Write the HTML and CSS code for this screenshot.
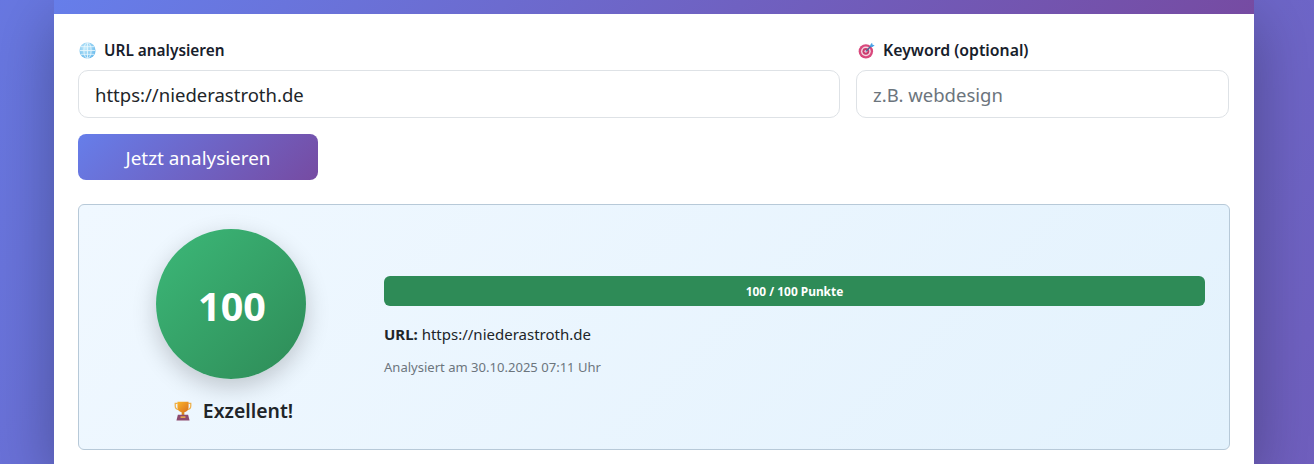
FILE: index.html
```html
<!DOCTYPE html>
<html lang="de">
<head>
<meta charset="utf-8">
<title>SEO Analyse</title>
<link rel="stylesheet" href="styles.css">
</head>
<body>
<main class="container">
  <div class="header-strip"></div>
  <section class="content">
    <form class="form-grid">
      <div class="field">
        <label class="label" for="url">
          <svg class="icon" viewBox="0 0 16 16"><defs><radialGradient id="g1" cx=".4" cy=".35" r=".75"><stop offset="0" stop-color="#c6ecfb"/><stop offset="1" stop-color="#5fb4ea"/></radialGradient></defs><circle cx="8" cy="8" r="7.6" fill="url(#g1)"/><g fill="none" stroke="#e9f7fd" stroke-width=".8"><ellipse cx="8" cy="8" rx="3.4" ry="7.4"/><path d="M8 .6v14.8M.6 8h14.8M1.6 4.4h12.8M1.6 11.6h12.8"/></g></svg>
          <span>URL analysieren</span>
        </label>
        <input class="input" id="url" type="text" value="https://niederastroth.de">
      </div>
      <div class="field">
        <label class="label label-keyword" for="kw">
          <svg class="icon" viewBox="0 0 16 16"><circle cx="7.4" cy="8.8" r="6.8" fill="#d9487d"/><circle cx="7.4" cy="8.8" r="4.6" fill="#f3d6e0"/><circle cx="7.4" cy="8.8" r="3.2" fill="#c93a6e"/><circle cx="7.4" cy="8.8" r="1.3" fill="#f3d6e0"/><path d="M7.4 8.8 13 3" stroke="#3d6f9e" stroke-width="1.2"/><path d="M11.6 2.6 13.2.6l.5 2 2 .5-2 1.7-2.1-.4z" fill="#4aa3e8"/></svg>
          <span>Keyword (optional)</span>
        </label>
        <input class="input" id="kw" type="text" placeholder="z.B. webdesign">
      </div>
    </form>
    <button class="submit" type="button">Jetzt analysieren</button>
    <section class="result">
      <div class="score-col">
        <div class="score-circle">100</div>
        <div class="rating">
          <svg class="trophy" viewBox="0 0 16 18"><defs><linearGradient id="g2" x1="0" y1="0" x2="1" y2="1"><stop offset="0" stop-color="#fbb62c"/><stop offset="1" stop-color="#d9701c"/></linearGradient></defs><path d="M3.2 2.2H1v2.3c0 1.900 1.400 3 3.200 3.200M12.800 2.200H15v2.300c0 1.900-1.400 3-3.200 3.200" fill="none" stroke="#eeb04a" stroke-width="1.100"/><path d="M3 .6h10v4.800c0 3-2.200 4.800-5 4.800s-5-1.800-5-4.800z" fill="url(#g2)"/><rect x="6.800" y="9.800" width="2.400" height="3" fill="#d9861f"/><path d="M3.400 12.400h9.200l1.300 5.200H2.100z" fill="#8d4a6e"/><rect x="5.800" y="13.800" width="4.400" height="1.400" fill="#eeb04a"/></svg>
          <span>Exzellent!</span>
        </div>
      </div>
      <div class="detail-col">
        <div class="progress"><div class="progress-bar" style="width: 100%">100 / 100 Punkte</div></div>
        <p class="url-line"><strong>URL:</strong> https://niederastroth.de</p>
        <p class="date-line">Analysiert am 30.10.2025 07:11 Uhr</p>
      </div>
    </section>
  </section>
</main>
</body>
</html>
```
FILE: styles.css
```css
* { box-sizing: border-box; }
html, body { margin: 0; height: 100%; overflow: hidden; }
body {
  padding-right: 6px;
  background: linear-gradient(135deg, #667eea 0%, #764ba2 100%);
  background-size: 100% 2336px;
  background-position: 0 -438px;
  background-repeat: no-repeat;
  font-family: "Noto Sans", "Open Sans", sans-serif;
  color: #212529;
}
.container {
  width: 1200px;
  margin: 0 auto;
  height: 100%;
  background: #fff;
  box-shadow: 0 20px 60px rgba(0, 0, 0, 0.3);
}
.header-strip {
  height: 14px;
  background: linear-gradient(135deg, #667eea 0%, #764ba2 100%);
}
.content { padding: 24px 24px 0; }
.form-grid {
  display: grid;
  grid-template-columns: 762px 373px;
  gap: 16px;
}
.label {
  display: flex;
  align-items: center;
  gap: 8px;
  height: 24px;
  margin-bottom: 8px;
  padding-left: 1px;
  font-size: 15.4px;
  font-weight: 600;
  color: #17202b;
}
.label-keyword { padding-left: 2px; font-size: 15.8px; }
.icon { width: 17px; height: 17px; flex: none; }
.input {
  display: block;
  width: 100%;
  height: 48px;
  padding: 0 16px;
  border: 1px solid #dee2e6;
  border-radius: 10px;
  background: #fff;
  font: inherit;
  font-size: 18.5px;
  color: #212529;
  outline: none;
}
.input::placeholder { color: #6c757d; opacity: 1; }
.submit {
  display: block;
  width: 240px;
  height: 46px;
  margin-top: 16px;
  padding: 2px 0 0;
  border: 0;
  border-radius: 8px;
  background: linear-gradient(135deg, #667eea 0%, #764ba2 100%);
  color: #fff;
  font: inherit;
  font-size: 18.9px;
}
.result {
  display: grid;
  grid-template-columns: 255px 1fr;
  column-gap: 26px;
  align-items: center;
  width: 1152px;
  margin-top: 24px;
  padding: 24px;
  border: 1px solid #b7c9d8;
  border-radius: 6px;
  background: linear-gradient(135deg, #f0f8ff 0%, #e3f2fd 100%);
}
.score-col { display: flex; flex-direction: column; align-items: center; }
.score-circle {
  display: flex;
  align-items: center;
  justify-content: center;
  width: 150px;
  height: 150px;
  padding: 3px 0 0 3px;
  border-radius: 50%;
  background: linear-gradient(135deg, #3cb878 0%, #2e8b57 100%);
  box-shadow: 0 8px 25px rgba(0, 0, 0, 0.2);
  color: #fff;
  font-size: 39.5px;
  font-weight: 700;
}
.rating {
  display: flex;
  align-items: center;
  gap: 11px;
  height: 29px;
  margin-top: 17px;
  margin-left: 6px;
  font-size: 19.4px;
  font-weight: 600;
  color: #212529;
}
.trophy { width: 18px; height: 20px; flex: none; }
.detail-col { padding-bottom: 2px; }
.progress {
  height: 30px;
  border-radius: 6px;
  overflow: hidden;
  background: #e9ecef;
}
.progress-bar {
  display: flex;
  align-items: center;
  justify-content: center;
  height: 100%;
  background: #2e8b57;
  color: #fff;
  font-size: 11.9px;
  font-weight: 700;
}
.url-line { margin: 16px 0 0; font-size: 15px; line-height: 24px; color: #212529; }
.url-line strong { font-weight: 700; }
.date-line { margin: 11px 0 0; font-size: 13.05px; line-height: 20px; color: #6c757d; }
```
